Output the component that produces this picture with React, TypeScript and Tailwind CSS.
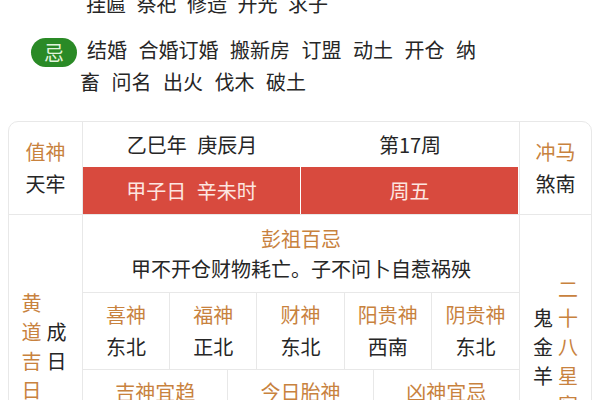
import React from 'react';

const line = 'border-[#e8e8e8]';
const orange = 'text-[#c8823e]';

const gods = [
  { name: '喜神', dir: '东北' },
  { name: '福神', dir: '正北' },
  { name: '财神', dir: '东北' },
  { name: '阳贵神', dir: '西南' },
  { name: '阴贵神', dir: '东北' },
];

const lower = [
  { name: '吉神宜趋', text: '天恩 母仓 时德 民日' },
  { name: '今日胎神', text: '占门碓外东南' },
  { name: '凶神宜忌', text: '天罡 死神 月刑 月害' },
];

const App: React.FC = () => {
  return (
    <div className="h-[400px] w-[600px] overflow-hidden bg-white font-['Noto_Sans_CJK_SC',sans-serif] text-[20px] text-[#262626]">
      {/* 宜 - last line */}
      <div className="-mt-[11px] pl-[86px] leading-[30px] [word-spacing:6px]">挂匾 祭祀 修造 开光 求子</div>

      {/* 忌 */}
      <div className="mt-[16px] pl-[80px] -indent-[49px] leading-[30px] [word-spacing:7px]">
        <span className="mr-[10px] inline-block h-[29px] w-[46px] rounded-full bg-[#2a8a26] text-center align-middle indent-0 leading-[29px] text-[#e2f4dc]">
          忌
        </span>
        结婚 合婚订婚 搬新房 订盟 动土 开仓 纳<br />畜 问名 出火 伐木 破土
      </div>

      {/* Almanac table */}
      <div className={`mt-[24px] ml-[8px] w-[584px] rounded-t-[10px] border ${line}`}>
        {/* Row 1 */}
        <div className={`flex border-b ${line}`}>
          <div className={`flex w-[74px] flex-col items-center justify-center border-r leading-[32px] ${line}`}>
            <span className={orange}>值神</span>
            <span>天牢</span>
          </div>
          <div className={`w-[437px] border-r ${line}`}>
            <div className="grid h-[45px] grid-cols-2 items-center text-center [word-spacing:6px]">
              <span>乙巳年 庚辰月</span>
              <span>第17周</span>
            </div>
            <div className="grid h-[47px] grid-cols-2 gap-px pr-px text-[#fde6e1] [word-spacing:6px]">
              <div className="flex items-center justify-center bg-[#d84a3e]">甲子日 辛未时</div>
              <div className="flex items-center justify-center bg-[#d84a3e]">周五</div>
            </div>
          </div>
          <div className="flex flex-1 flex-col items-center justify-center leading-[32px]">
            <span className={orange}>冲马</span>
            <span>煞南</span>
          </div>
        </div>

        {/* Row 2 */}
        <div className="flex">
          <div className={`flex w-[74px] items-center justify-center gap-[5px] border-r pr-[3px] leading-[29px] ${line}`}>
            <div className={`w-[20px] break-all ${orange}`}>黄道吉日</div>
            <div className="w-[20px] break-all">成日</div>
          </div>
          <div className={`w-[437px] border-r ${line}`}>
            <div className="flex h-[77px] flex-col items-center justify-center leading-[30px]">
              <span className={orange}>彭祖百忌</span>
              <span>甲不开仓财物耗亡。子不问卜自惹祸殃</span>
            </div>
            <div className={`grid h-[78px] grid-cols-5 border-y ${line}`}>
              {gods.map((g, i) => (
                <div
                  key={g.name}
                  className={`flex flex-col items-center justify-center leading-[32px] ${i < 4 ? `border-r ${line}` : ''}`}
                >
                  <span className={orange}>{g.name}</span>
                  <span>{g.dir}</span>
                </div>
              ))}
            </div>
            <div className="grid h-[107px] grid-cols-3">
              {lower.map((c, i) => (
                <div
                  key={c.name}
                  className={`flex flex-col items-center pt-[6px] leading-[32px] ${i < 2 ? `border-r ${line}` : ''}`}
                >
                  <span className={orange}>{c.name}</span>
                  <span className="px-2 text-center text-[16px] leading-[26px]">{c.text}</span>
                </div>
              ))}
            </div>
          </div>
          <div className="flex flex-1 items-center justify-center gap-[5px] leading-[29px]">
            <div className="w-[20px] break-all">鬼金羊</div>
            <div className={`w-[20px] break-all ${orange}`}>二十八星宿</div>
          </div>
        </div>
      </div>
    </div>
  );
};

export default App;
